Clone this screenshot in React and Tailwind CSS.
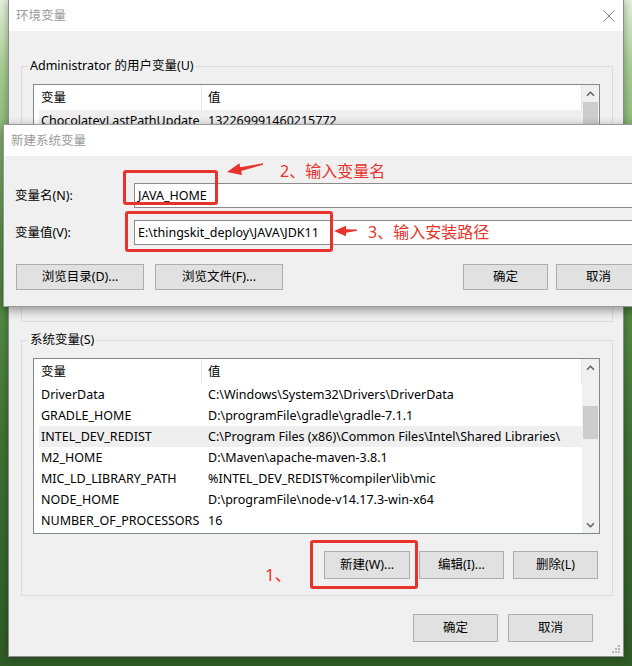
import React from "react";

const userRows = [
  ["ChocolateyLastPathUpdate", "132269991460215772", true],
  ["ChocolateyToolsLocation", "C:\\tools", false],
  ["OneDrive", "C:\\Users\\Administrator\\OneDrive", false],
  ["Path", "C:\\Users\\Administrator\\AppData\\Local\\Microsoft\\WindowsApps;", false],
  ["TEMP", "C:\\Users\\Administrator\\AppData\\Local\\Temp", false],
  ["TMP", "C:\\Users\\Administrator\\AppData\\Local\\Temp", false],
  ["", "", false],
];

const sysRows = [
  ["DriverData", "C:\\Windows\\System32\\Drivers\\DriverData", false],
  ["GRADLE_HOME", "D:\\programFile\\gradle\\gradle-7.1.1", false],
  ["INTEL_DEV_REDIST", "C:\\Program Files (x86)\\Common Files\\Intel\\Shared Libraries\\", true],
  ["M2_HOME", "D:\\Maven\\apache-maven-3.8.1", false],
  ["MIC_LD_LIBRARY_PATH", "%INTEL_DEV_REDIST%compiler\\lib\\mic", false],
  ["NODE_HOME", "D:\\programFile\\node-v14.17.3-win-x64", false],
  ["NUMBER_OF_PROCESSORS", "16", false],
];

function Chevron({ down }) {
  return (
    <svg width="9" height="6" viewBox="0 0 9 6" className="block">
      <path
        d={down ? "M1 1.2 L4.5 4.7 L8 1.2" : "M1 4.8 L4.5 1.3 L8 4.8"}
        fill="none"
        stroke="#606060"
        strokeWidth="1.5"
      />
    </svg>
  );
}

function ListView({ rows, thumbTop, thumbHeight }) {
  return (
    <div className="flex h-[176px] w-[567px] border border-[#828790] bg-white">
      <div className="flex flex-1 flex-col overflow-hidden">
        <div className="flex h-[25px] shrink-0 items-center">
          <div className="flex h-full w-[168px] items-center border-r border-[#e5e5e5] pl-[7px]">变量</div>
          <div className="flex h-full flex-1 items-center border-r border-[#e5e5e5] pl-[6px]">值</div>
        </div>
        {rows.map(([name, value, hl], i) => (
          <div
            key={i}
            className={`ml-[5px] flex h-[21px] shrink-0 items-center whitespace-nowrap ${hl ? "bg-[#efefef]" : ""}`}
          >
            <div className="w-[163px] shrink-0 overflow-hidden pl-[2px]">{name}</div>
            <div className="pl-[6px]">{value}</div>
          </div>
        ))}
      </div>
      <div className="flex w-[17px] shrink-0 flex-col bg-[#f0f0f0]">
        <div className="flex h-[17px] shrink-0 items-center justify-center">
          <Chevron />
        </div>
        <div className="flex-1 px-[1px]">
          <div className={`${thumbTop} ${thumbHeight} bg-[#cdcdcd]`}></div>
        </div>
        <div className="flex h-[17px] shrink-0 items-center justify-center">
          <Chevron down />
        </div>
      </div>
    </div>
  );
}

function Btn({ w, h, children }) {
  return (
    <div className={`flex ${w} ${h} shrink-0 items-center justify-center border border-[#adadad] bg-[#e1e1e1]`}>
      {children}
    </div>
  );
}

function Group({ label, children, mt }) {
  return (
    <div className={`relative ${mt} h-[256px] border border-[#dcdcdc] pl-[11px] pt-[17px]`}>
      <span className="absolute left-[6px] top-[-9px] bg-[#f0f0f0] px-[2px] leading-[16px]">{label}</span>
      {children}
    </div>
  );
}

export default function App() {
  return (
    <div className="relative h-[666px] w-[632px] overflow-hidden bg-[linear-gradient(180deg,#e4f1dc_0%,#a9cf93_10%,#5f9a4c_35%,#3f7434_65%,#2e5a26_100%)] pl-[8px] font-['Noto_Sans','Noto_Sans_CJK_SC',sans-serif] text-[12.5px] leading-[16px] text-black">
      {/* Outer window: 环境变量 */}
      <div className="relative flex h-[657px] w-[616px] flex-col border-x border-b border-[#8c8c8c] shadow-[0_0_8px_rgba(0,0,0,0.35)]">
        <div className="flex h-[31px] shrink-0 items-center justify-between bg-white pl-[7px] pr-[8px] text-[#9a9a9a]">
          <span>环境变量</span>
          <svg width="12" height="12" viewBox="0 0 12 12">
            <path d="M0.5 0.5 L11.5 11.5 M11.5 0.5 L0.5 11.5" stroke="#8a8a8a" strokeWidth="1" />
          </svg>
        </div>
        <div className="flex flex-1 flex-col bg-[#f0f0f0] pl-[12px] pr-[10px] pt-[35px]">
          <Group label="Administrator 的用户变量(U)" mt="mt-0">
            <ListView rows={userRows} thumbTop="mt-0" thumbHeight="h-[60px]" />
          </Group>
          <Group label="系统变量(S)" mt="mt-[18px]">
            <ListView rows={sysRows} thumbTop="mt-[30px]" thumbHeight="h-[33px]" />
            <div className="mt-[17px] flex w-[567px] justify-end gap-[9px] pr-[2px]">
              <Btn w="w-[86px]" h="h-[28px]">新建(W)...</Btn>
              <Btn w="w-[85px]" h="h-[28px]">编辑(I)...</Btn>
              <Btn w="w-[85px]" h="h-[28px]">删除(L)</Btn>
            </div>
          </Group>
          <div className="mt-[18px] flex justify-end gap-[10px] pr-[20px]">
            <Btn w="w-[85px]" h="h-[28px]">确定</Btn>
            <Btn w="w-[85px]" h="h-[28px]">取消</Btn>
          </div>
        </div>
        {/* resize grip */}
        <svg width="9" height="9" viewBox="0 0 9 9" className="absolute bottom-[2px] right-[2px]">
          <rect x="6" y="0" width="2" height="2" fill="#b8b8b8" />
          <rect x="3" y="3" width="2" height="2" fill="#b8b8b8" />
          <rect x="6" y="3" width="2" height="2" fill="#b8b8b8" />
          <rect x="0" y="6" width="2" height="2" fill="#b8b8b8" />
          <rect x="3" y="6" width="2" height="2" fill="#b8b8b8" />
          <rect x="6" y="6" width="2" height="2" fill="#b8b8b8" />
        </svg>
      </div>

      {/* Dialog: 新建系统变量 */}
      <div className="absolute left-[3px] top-[124px] flex w-[650px] flex-col border border-[#9a9a9a] shadow-[0_3px_10px_rgba(0,0,0,0.4)]">
        <div className="flex h-[31px] items-center bg-white pl-[7px] text-[#9a9a9a]">新建系统变量</div>
        <div className="flex h-[150px] flex-col bg-[#f0f0f0] pl-[11px] pr-[11px]">
          <div className="mt-[27px] flex items-center">
            <div className="w-[119px] shrink-0">变量名(N):</div>
            <div className="flex h-[25px] flex-1 items-center border border-[#8a8a8a] bg-white pl-[3px]">JAVA_HOME</div>
          </div>
          <div className="mt-[12px] flex items-center">
            <div className="w-[119px] shrink-0">变量值(V):</div>
            <div className="flex h-[25px] flex-1 items-center border border-[#8a8a8a] bg-white pl-[3px]">E:\thingskit_deploy\JAVA\JDK11</div>
          </div>
          <div className="mt-[19px] flex items-center justify-between pl-[1px]">
            <div className="flex gap-[11px]">
              <Btn w="w-[128px]" h="h-[26px]">浏览目录(D)...</Btn>
              <Btn w="w-[128px]" h="h-[26px]">浏览文件(F)...</Btn>
            </div>
            <div className="flex gap-[8px]">
              <Btn w="w-[85px]" h="h-[26px]">确定</Btn>
              <Btn w="w-[85px]" h="h-[26px]">取消</Btn>
            </div>
          </div>
        </div>
      </div>

      {/* Red annotations */}
      <div className="absolute left-[123px] top-[170px] h-[35px] w-[95px] rounded-[3px] border-[3px] border-[#e8322c]"></div>
      <div className="absolute left-[125px] top-[211px] h-[41px] w-[208px] rounded-[3px] border-[3px] border-[#e8322c]"></div>
      <div className="absolute left-[310px] top-[540px] h-[49px] w-[108px] rounded-[3px] border-[3px] border-[#e8322c]"></div>
      <svg width="632" height="666" viewBox="0 0 632 666" className="pointer-events-none absolute left-0 top-0">
        <polygon
          fill="#e8322c"
          points="227,172 239.4,163.2 240.3,167.3 262.9,163.3 263.1,164.7 241.1,170.9 242,175"
        />
        <polygon
          fill="#e8322c"
          points="334,231 346,225.8 346,229.3 357,229.6 357,230.8 346,232.8 346,236.2"
        />
      </svg>
      <span className="absolute left-[280px] top-[160px] text-[16px] leading-[22px] text-[#e8322c]">2、输入变量名</span>
      <span className="absolute left-[368px] top-[221px] text-[16px] leading-[22px] text-[#e8322c]">3、输入安装路径</span>
      <span className="absolute left-[265px] top-[564px] text-[17px] leading-[22px] text-[#e8322c]">1、</span>
    </div>
  );
}
